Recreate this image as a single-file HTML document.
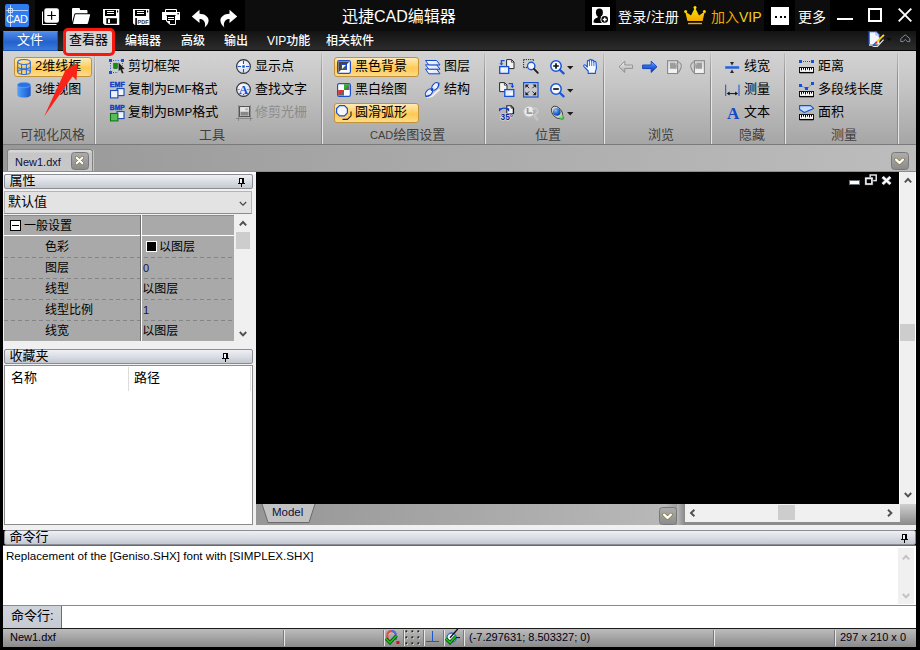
<!DOCTYPE html>
<html lang="zh-CN">
<head>
<meta charset="utf-8">
<title>迅捷CAD编辑器</title>
<style>
*{box-sizing:border-box;margin:0;padding:0}
html,body{width:920px;height:650px;overflow:hidden;background:#000}
body{position:relative;font-family:"Liberation Sans","Noto Sans CJK SC",sans-serif;font-size:13px;color:#000}
.a{position:absolute}
.t{position:absolute;white-space:nowrap;line-height:16px;height:16px}
svg{position:absolute;overflow:visible}
/* title bar */
#title{left:0;top:0;width:920px;height:31px;background:#0d0d0d}
#menubar{left:3px;top:31px;width:913px;height:19px;background:linear-gradient(#131313,#2c2c2c)}
.menu{color:#fff;font-size:12px;top:33px;font-weight:500}
/* ribbon */
#ribbon{left:3px;top:51px;width:913px;height:93px;background:linear-gradient(#d3d3d3 0%,#c6c6c6 35%,#a6a6a6 100%)}
.sep{position:absolute;top:53px;width:2px;height:91px;background:linear-gradient(90deg,#8c8c8c 0,#8c8c8c 1px,#e6e6e6 1px,#e6e6e6 2px);-webkit-mask-image:linear-gradient(rgba(0,0,0,.25) 0,#000 28%);mask-image:linear-gradient(rgba(0,0,0,.25) 0,#000 28%)}
.gl{position:absolute;top:127px;height:16px;line-height:16px;font-size:13px;color:#404040;white-space:nowrap}
.ri{position:absolute;font-size:13px;line-height:16px;height:16px;white-space:nowrap;color:#000}
.hb{position:absolute;height:20px;border:1px solid #c2923a;border-radius:3px;background:linear-gradient(#ffe9b6 0%,#ffd574 40%,#ffc850 55%,#ffdb8c 100%)}
/* panels */
.hdr{position:absolute;height:15px;border:1px solid #8a8d94;border-radius:2px;background:linear-gradient(#eef0f4 0%,#dcdfe6 45%,#c4c8d0 100%);font-size:13px}
.hdr span{position:absolute;left:4.5px;top:-2px;line-height:16px}
.grow{position:absolute;left:4px;width:230px;height:21px;background:#a9a9a9;font-size:12px}
.grow .k{position:absolute;left:40px;top:3px;line-height:16px;white-space:nowrap}
.grow .v{position:absolute;left:139px;top:3px;line-height:16px;white-space:nowrap}
.dash{position:absolute;left:4px;width:230px;height:1px;background:repeating-linear-gradient(90deg,#858585 0,#858585 4px,transparent 4px,transparent 7px)}
.dd{width:18px;height:18px;border:1px solid #787878;border-radius:3.5px;background:linear-gradient(#acacac,#8c8c8c)}
.pin{position:absolute;width:7px;height:9px}
.pin i{position:absolute;background:#000}
.sb{position:absolute;background:#f0f0f0}
.thumb{position:absolute;background:#cdcdcd}
.ssep{position:absolute;top:630px;width:2px;height:16px;border-left:1px solid #7a7a7a;border-right:1px solid #e8e8e8}
.st{position:absolute;top:629px;font-size:11px;line-height:16px;white-space:nowrap;color:#000014}
</style>
</head>
<body>
<!-- ===== TITLE BAR ===== -->
<div id="title" class="a"></div>
<div class="a" style="left:35px;top:0;width:210px;height:31px;background:#000"></div>
<div class="a" style="left:585px;top:0;width:31px;height:31px;background:#000"></div>
<div class="a" style="left:764px;top:0;width:31px;height:31px;background:#000"></div>
<div class="a" style="left:830px;top:0;width:90px;height:31px;background:#000"></div>
<!-- logo -->
<div class="a" style="left:5px;top:4px;width:24px;height:23px;background:#2f7cf0;border-radius:2px"></div>
<div class="a" style="left:10px;top:5px;width:1px;height:22px;background:rgba(230,240,255,.75)"></div>
<div class="a" style="left:6px;top:10px;width:22px;height:1px;background:rgba(230,240,255,.75)"></div>
<div class="a" style="left:8px;top:8px;width:5px;height:5px;border:1px solid rgba(230,240,255,.75)"></div>
<div class="t" style="left:6px;top:12px;font-size:11px;color:#fff;line-height:14px;letter-spacing:-0.6px">CAD</div>
<!-- title icons -->
<svg style="left:42px;top:8px" width="18" height="18" viewBox="0 0 18 18">
<path d="M0.5 3.5V16.5H14.5" fill="none" stroke="#fff" stroke-width="1"/>
<rect x="2.3" y="0.2" width="14.6" height="14.6" rx="2.2" fill="#fff"/>
<path d="M9.6 3.2V11.8M5.3 7.5H13.9" stroke="#000" stroke-width="1.2" fill="none"/></svg>
<svg style="left:71px;top:8px" width="20" height="17" viewBox="0 0 20 17">
<path d="M1 14.5V1Q1 0 2 0H8Q9 0 9 1V2H15.5Q16.5 2 16.5 3V5.2H4.6Q3.6 5.2 3.3 6.2Z" fill="#fff"/>
<path d="M4.8 6.2H18.6Q19.3 6.2 19.1 7L17 15.3Q16.8 16 16 16H2.6Q1.8 16 2.1 15.2L4 6.9Q4.2 6.2 4.8 6.2Z" fill="#fff"/></svg>
<svg style="left:103px;top:9px" width="17" height="16" viewBox="0 0 17 16">
<path d="M0 0H16.3V16H1.8L0 14.2Z" fill="#fff"/>
<rect x="2" y="1" width="11" height="6" fill="#000"/>
<rect x="4" y="2" width="7" height="1" fill="#fff"/><rect x="4" y="4" width="7" height="1" fill="#fff"/>
<rect x="14" y="1.3" width="1.2" height="2.2" rx=".6" fill="#000"/>
<rect x="3.3" y="9.2" width="10.6" height="5.6" fill="#000"/>
<rect x="5" y="10.2" width="2" height="3.8" fill="#fff"/></svg>
<svg style="left:133px;top:9px" width="17" height="16" viewBox="0 0 17 16">
<path d="M0 0H16.3V16H1.8L0 14.2Z" fill="#fff"/>
<rect x="2" y="1" width="11" height="6" fill="#000"/>
<rect x="4" y="2" width="7" height="1" fill="#fff"/><rect x="4" y="4" width="7" height="1" fill="#fff"/>
<rect x="14" y="1.3" width="1.2" height="2.2" rx=".6" fill="#000"/>
<rect x="2.3" y="9" width="1.6" height="7" fill="#000"/>
<rect x="4" y="10.3" width="12.3" height="5.7" fill="#fff"/>
<text x="4.6" y="15.2" font-family="Liberation Sans,sans-serif" font-weight="bold" font-size="5.6" fill="#333" textLength="11" lengthAdjust="spacingAndGlyphs">PDF</text></svg>
<svg style="left:162px;top:9px" width="18" height="16" viewBox="0 0 18 16">
<path d="M3.5 3V0.5H14.5V3" fill="none" stroke="#fff" stroke-width="1"/>
<path d="M0 3H18V11H14V6H4V11H0Z" fill="#fff"/>
<rect x="15.4" y="4" width="1.4" height="1.4" fill="#000"/>
<path d="M4.5 6.5V12L8 15.5H13.5V6.5" fill="#000" stroke="#fff" stroke-width="1"/>
<path d="M4.5 12H8V15.5Z" fill="#fff"/>
<rect x="6" y="8" width="6" height="1" fill="#fff"/><rect x="6" y="10" width="6" height="1" fill="#fff"/></svg>
<svg style="left:191px;top:9px" width="19" height="19" viewBox="0 0 19 19">
<path d="M0.8 7.4L8.5 0.8V4.8C13.5 4.8 17.6 7.6 17.6 11.6C17.6 14.6 15.6 16.8 13.6 18.6C14.6 16 14.2 13 12.6 11.4C11.4 10.3 10 10.1 8.5 10.1V14Z" fill="#fff"/></svg>
<svg style="left:219px;top:9px" width="19" height="19" viewBox="0 0 19 19">
<path transform="translate(19,0) scale(-1,1)" d="M0.8 7.4L8.5 0.8V4.8C13.5 4.8 17.6 7.6 17.6 11.6C17.6 14.6 15.6 16.8 13.6 18.6C14.6 16 14.2 13 12.6 11.4C11.4 10.3 10 10.1 8.5 10.1V14Z" fill="#fff"/></svg>
<!-- user -->
<svg style="left:592px;top:7px" width="18" height="18" viewBox="0 0 18 18">
<rect width="18" height="18" fill="#fff"/>
<ellipse cx="7.4" cy="5.6" rx="3.5" ry="4.2" fill="#000"/>
<path d="M1.5 15.5C1.2 12.5 3 11.2 5.6 10.4L6 8.5H9L9.4 10.4C11 10.9 12 11.4 12.6 12.4V15.8C8 16.3 4 16.2 1.5 15.5Z" fill="#000"/>
<circle cx="12.7" cy="12.4" r="4.3" fill="#fff"/>
<circle cx="12.7" cy="12.4" r="3.3" fill="#000"/>
<path d="M12.7 10.4V14.4M10.7 12.4H14.7" stroke="#fff" stroke-width="1.5" fill="none"/>
</svg>
<!-- crown -->
<svg style="left:684px;top:6px" width="22" height="19" viewBox="0 0 22 19">
<defs><linearGradient id="gc" x1="0" y1="0" x2="0" y2="1"><stop offset="0" stop-color="#ffe400"/><stop offset="1" stop-color="#f3aa00"/></linearGradient></defs>
<path d="M3.4 15L1.2 5.6L7 9.4L11 1.6L15 9.4L20.8 5.6L18.6 15Z" fill="url(#gc)"/>
<circle cx="11" cy="1.5" r="1.5" fill="#ffe400"/><circle cx="1.6" cy="5.4" r="1.5" fill="#ffd400"/><circle cx="20.4" cy="5.4" r="1.5" fill="#ffd400"/>
<rect x="4" y="16.8" width="14" height="1.4" fill="#f3aa00"/></svg>
<!-- more dots -->
<div class="a" style="left:771px;top:7px;width:18px;height:18px;background:#fff"></div>
<div class="a" style="left:775px;top:15.6px;width:2.3px;height:2.3px;background:#000"></div>
<div class="a" style="left:779.5px;top:15.6px;width:2.3px;height:2.3px;background:#000"></div>
<div class="a" style="left:784px;top:15.6px;width:2.3px;height:2.3px;background:#000"></div>
<!-- title text -->
<div class="t" style="left:342px;top:7px;font-size:16px;color:#fff;line-height:20px;height:20px">迅捷CAD编辑器</div>
<div class="t" style="left:618px;top:7px;font-size:14px;color:#fff;line-height:20px;height:20px;letter-spacing:.3px">登录/注册</div>
<div class="t" style="left:711px;top:7px;font-size:14px;line-height:20px;height:20px;color:#f0a800">加入<span style="color:#f0d020">VIP</span></div>
<div class="t" style="left:798px;top:7px;font-size:14px;color:#fff;line-height:20px;height:20px">更多</div>
<!-- window buttons -->
<div class="a" style="left:837px;top:18px;width:16px;height:2px;background:#fff"></div>
<div class="a" style="left:868px;top:8px;width:14px;height:14px;border:2px solid #fff"></div>
<svg style="left:898px;top:8px" width="14" height="14" viewBox="0 0 14 14"><path d="M0.7 0.7L13.3 13.3M13.3 0.7L0.7 13.3" stroke="#fff" stroke-width="1.9" fill="none"/></svg>

<!-- ===== MENU BAR ===== -->
<div id="menubar" class="a"></div>
<div class="a" style="left:3px;top:50px;width:913px;height:1px;background:#050505"></div>
<div class="a" style="left:3px;top:31px;width:55px;height:20px;background:linear-gradient(#4f8ae6 0%,#2c6ad2 45%,#2461cc 55%,#3b7bdc 100%);border:1px solid #1f57b8;border-top-color:#5a92ea"></div>
<div class="t menu" style="left:17px;font-size:13px;top:32px;font-weight:400">文件</div>
<div class="a" style="left:66px;top:31px;width:46px;height:21px;background:#d2d2d2"></div>
<div class="t" style="left:69px;top:32px;font-size:13px;color:#000">查看器</div>
<div class="t menu" style="left:125px">编辑器</div>
<div class="t menu" style="left:181px">高级</div>
<div class="t menu" style="left:224px">输出</div>
<div class="t menu" style="left:267px">VIP功能</div>
<div class="t menu" style="left:326px">相关软件</div>

<!-- ===== RIBBON ===== -->
<div id="ribbon" class="a"></div>
<div class="a" style="left:3px;top:144px;width:913px;height:1px;background:#7a7a7a"></div>
<div class="sep" style="left:94px"></div>
<div class="sep" style="left:321px"></div>
<div class="sep" style="left:484px"></div>
<div class="sep" style="left:603px"></div>
<div class="sep" style="left:710px"></div>
<div class="sep" style="left:784px"></div>
<div class="sep" style="left:897px"></div>
<!-- group labels -->
<div class="gl" style="left:20px">可视化风格</div>
<div class="gl" style="left:199px">工具</div>
<div class="gl" style="left:370px"><span style="font-size:11px">CAD</span>绘图设置</div>
<div class="gl" style="left:535px">位置</div>
<div class="gl" style="left:648px">浏览</div>
<div class="gl" style="left:739px">隐藏</div>
<div class="gl" style="left:831px">测量</div>
<!-- group 1 -->
<div class="hb" style="left:14px;top:57px;width:78px"></div>
<div class="ri" style="left:35px;top:58px">2维线框</div>
<div class="ri" style="left:35px;top:81px">3维视图</div>
<!-- group 2 -->
<div class="ri" style="left:128px;top:58px">剪切框架</div>
<div class="ri" style="left:128px;top:81px">复制为<span style="font-size:11.6px">EMF</span>格式</div>
<div class="ri" style="left:128px;top:104px">复制为<span style="font-size:11.6px">BMP</span>格式</div>
<div class="ri" style="left:255px;top:58px">显示点</div>
<div class="ri" style="left:255px;top:81px">查找文字</div>
<div class="ri" style="left:255px;top:104px;color:#8c8c8c">修剪光栅</div>
<!-- group 3 -->
<div class="hb" style="left:334px;top:57px;width:85px"></div>
<div class="hb" style="left:334px;top:103px;width:85px"></div>
<div class="ri" style="left:355px;top:58px">黑色背景</div>
<div class="ri" style="left:355px;top:81px">黑白绘图</div>
<div class="ri" style="left:355px;top:104px">圆滑弧形</div>
<div class="ri" style="left:444px;top:58px">图层</div>
<div class="ri" style="left:444px;top:81px">结构</div>
<!-- group 6 -->
<div class="ri" style="left:744px;top:58px">线宽</div>
<div class="ri" style="left:744px;top:81px">测量</div>
<div class="ri" style="left:744px;top:104px">文本</div>
<!-- group 7 -->
<div class="ri" style="left:818px;top:58px">距离</div>
<div class="ri" style="left:818px;top:81px">多段线长度</div>
<div class="ri" style="left:818px;top:104px">面积</div>

<!-- ribbon icons -->
<!-- g1: wire cylinder -->
<svg style="left:17px;top:59px" width="14" height="16" viewBox="0 0 14 16">
<g fill="none" stroke="#2a6fe2" stroke-width="1.1">
<ellipse cx="7" cy="3" rx="6.3" ry="2.5"/><ellipse cx="7" cy="13" rx="6.3" ry="2.5"/>
<path d="M0.7 3V13M13.3 3V13M4.6 5.3V15.2M9.4 5.3V15.2M0.7 8.3C3 10.2 11 10.2 13.3 8.3"/></g></svg>
<!-- g1: solid cylinder -->
<svg style="left:17px;top:82px" width="14" height="16" viewBox="0 0 14 16">
<defs><linearGradient id="cy" x1="0" y1="0" x2="1" y2="0"><stop offset="0" stop-color="#5aa2f6"/><stop offset=".35" stop-color="#3a86ee"/><stop offset="1" stop-color="#1d58c8"/></linearGradient></defs>
<path d="M0.3 3V13C0.3 16.4 13.7 16.4 13.7 13V3Z" fill="url(#cy)"/>
<ellipse cx="7" cy="3" rx="6.7" ry="2.7" fill="#2c72e2" stroke="#79b4fa" stroke-width=".6"/></svg>
<!-- g2 col1: crop frame -->
<svg style="left:109px;top:59px" width="16" height="16" viewBox="0 0 16 16">
<g fill="#1450d8"><rect x="0" y="0" width="3" height="3"/><rect x="12" y="0" width="3" height="3"/><rect x="0" y="12" width="3" height="3"/></g>
<path d="M4 1.5H11.5M1.5 4V11.5M4 13.5H9M13.5 4V7" stroke="#1450d8" stroke-width="1" stroke-dasharray="1 1.4" fill="none"/>
<rect x="4.7" y="4.2" width="3.6" height="5.4" fill="#0f920f" stroke="#0a6a0a" stroke-width=".6"/>
<path d="M9.6 3.4V12.2L11.3 10.6L13 14.6L14.6 13.9L13 10.2L15.6 10.1Z" fill="#1c1c1c"/></svg>
<!-- EMF -->
<svg style="left:109px;top:82px" width="17" height="17" viewBox="0 0 17 17">
<text x="0.8" y="4.8" font-family="Liberation Sans,sans-serif" font-weight="bold" font-size="6.4" fill="#1040c8" stroke="#1040c8" stroke-width=".35" textLength="15" lengthAdjust="spacingAndGlyphs">EMF</text>
<rect x="8" y="6.6" width="7" height="7" fill="#f2f5fd" stroke="#1a48b8" stroke-width="1.1"/>
<rect x="1.5" y="8.5" width="7.4" height="7.4" fill="#eaf0fc" stroke="#1a48b8" stroke-width="1.1"/>
<path d="M8.6 6.6V8.6" stroke="#1450d8" stroke-width=".8"/></svg>
<!-- BMP -->
<svg style="left:109px;top:105px" width="17" height="17" viewBox="0 0 17 17">
<text x="0.8" y="4.8" font-family="Liberation Sans,sans-serif" font-weight="bold" font-size="6.4" fill="#1040c8" stroke="#1040c8" stroke-width=".35" textLength="15" lengthAdjust="spacingAndGlyphs">BMP</text>
<rect x="8" y="6.6" width="7" height="7" fill="#f2f5fd" stroke="#1a48b8" stroke-width="1.1"/>
<rect x="1.5" y="8.5" width="7.4" height="7.4" fill="#5cba5c" stroke="#0c7a0c" stroke-width="1.1"/>
<path d="M8.6 6.6V8.6" stroke="#d04040" stroke-width=".8"/></svg>
<!-- g2 col2: show point -->
<svg style="left:236px;top:59px" width="15" height="15" viewBox="0 0 15 15">
<defs><radialGradient id="rg1" cx=".4" cy=".35" r=".7"><stop offset="0" stop-color="#fff"/><stop offset="1" stop-color="#cfd8f2"/></radialGradient></defs>
<circle cx="7.5" cy="7.5" r="6.9" fill="url(#rg1)" stroke="#2e2e2e" stroke-width="1.1"/>
<path d="M7.5 1.6V5M7.5 10V13.4M1.6 7.5H5M10 7.5H13.4" stroke="#1450d8" stroke-width="1.1"/>
<rect x="6.3" y="6.3" width="2.4" height="2.4" fill="#1450d8"/></svg>
<!-- find text -->
<svg style="left:236px;top:82px" width="15" height="15" viewBox="0 0 15 15">
<circle cx="7.5" cy="7.5" r="6.9" fill="url(#rg1)" stroke="#2e2e2e" stroke-width="1.1"/>
<path d="M1.6 7.5H3.6M11.4 7.5H13.4M7.5 12V13.4" stroke="#1450d8" stroke-width="1" stroke-dasharray="1 .6"/>
<text x="7.5" y="11.8" text-anchor="middle" font-family="Liberation Serif,serif" font-weight="bold" font-size="12.5" fill="#1448c8">A</text></svg>
<!-- trim raster (disabled) -->
<svg style="left:236px;top:105px" width="17" height="17" viewBox="0 0 17 17">
<path d="M2.5 0V16M14.5 0V16M0 13.5H16.5" stroke="#7a7a7a" stroke-width=".7"/>
<rect x="3.5" y="1.5" width="10" height="10" fill="#d8d8d8" stroke="#555" stroke-width="1"/>
<rect x="4.5" y="6.6" width="8" height="4" fill="#888"/><rect x="4.5" y="2.5" width="8" height="4" fill="#e6e6e6"/><circle cx="10.6" cy="4.3" r="1.3" fill="#b4b4b4"/></svg>
<!-- g3: black bg -->
<svg style="left:337px;top:60px" width="14" height="14" viewBox="0 0 14 14">
<rect x=".6" y=".6" width="12.8" height="12.8" rx="1.6" fill="#fff" stroke="#1a50d0" stroke-width="1.2"/>
<path d="M1.4 1.4H12.6L1.4 12.6Z" fill="#444"/>
<rect x="4" y="4" width="6" height="6" fill="#1a50d0"/>
<path d="M5 5H9V9H5Z" fill="#fff"/><path d="M9 5V9H5Z" fill="#555"/></svg>
<!-- bw -->
<svg style="left:337px;top:83px" width="14" height="14" viewBox="0 0 14 14">
<rect x=".6" y=".6" width="12.8" height="12.8" rx="1.6" fill="#fff" stroke="#1a50d0" stroke-width="1.2"/>
<path d="M7 1.4H12.6V7H7Z" fill="#666"/><path d="M7 1.4H12.6L7 7Z" fill="#28b428"/>
<path d="M1.4 7H7V12.6H1.4Z" fill="#666"/><path d="M1.4 7H7L1.4 12.6Z" fill="#e03030"/></svg>
<!-- smooth arc -->
<svg style="left:336px;top:105px" width="16" height="16" viewBox="0 0 16 16">
<path d="M3.6 0.6H8.4L11.4 3.6V7.8L8.4 10.8H3.6L0.6 7.8V3.6Z" fill="#f4f6fc" stroke="#1a50d0" stroke-width="1.2"/>
<path d="M15 6.4V10.8L11.4 14.4H6.5" fill="none" stroke="#222" stroke-width="1.1"/></svg>
<!-- layers -->
<svg style="left:425px;top:60px" width="16" height="15" viewBox="0 0 16 15">
<defs><linearGradient id="ly" x1="0" y1="0" x2="1" y2="1"><stop offset="0" stop-color="#fff"/><stop offset="1" stop-color="#d4e0fa"/></linearGradient></defs>
<g fill="url(#ly)" stroke="#1448c8" stroke-width="1" stroke-linejoin="round">
<path d="M0.5 9H11.6L15 13.8H3.8Z"/><path d="M0.5 4.8H11.6L15 9.2H3.8Z"/><path d="M0.5 0.5H11.6L15 4.9H3.8Z"/></g></svg>
<!-- dna -->
<svg style="left:425px;top:82px" width="16" height="16" viewBox="0 0 16 16">
<path d="M2 15.4L7 14.2L14.6 7.4" fill="none" stroke="#f2f2f2" stroke-width="1.6"/>
<g fill="#e4ecfc" stroke="#1448c8" stroke-width="1.05">
<ellipse cx="3.9" cy="10.6" rx="4.4" ry="2.7" transform="rotate(-48 3.9 10.6)"/>
<ellipse cx="10.2" cy="4.4" rx="4.4" ry="2.7" transform="rotate(-48 10.2 4.4)"/></g>
<path d="M0.4 14.2C2 14.6 3.4 14 4.6 13M13.8 0.6C14.2 2 13.6 3.2 12.8 4.4" fill="none" stroke="#1448c8" stroke-width="1.2"/>
<path d="M2.6 9L5.4 12M4.4 7.8L6.4 10M8.8 3L11.6 6M10.4 1.6L12.6 4" stroke="#fff" stroke-width=".9"/>
<path d="M6 8.6L8 6.4" stroke="#1448c8" stroke-width="1.6"/></svg>
<!-- g4 position icons -->
<svg style="left:499px;top:59px" width="16" height="15" viewBox="0 0 16 15">
<path d="M7.6 0.6H12.6L15 3V9.6H7.6Z" fill="#f4f4f4" stroke="#2a2a2a" stroke-width="1"/><path d="M12.4 0.8V3.2H14.8" fill="none" stroke="#2a2a2a" stroke-width=".8"/>
<rect x="0.7" y="7.6" width="9" height="6.8" fill="#e8effc" stroke="#1450d8" stroke-width="1.3"/>
<rect x="2" y="9" width="3" height="2.4" fill="#fff"/>
<path d="M5.6 1.6H2.4V4.6" fill="none" stroke="#1450d8" stroke-width="1.3"/><path d="M0.4 4.2L2.4 6.6L4.4 4.2Z" fill="#1450d8"/></svg>
<svg style="left:499px;top:82px" width="16" height="15" viewBox="0 0 16 15">
<path d="M0.6 0.6H5.6L8 3V9.6H0.6Z" fill="#f4f4f4" stroke="#2a2a2a" stroke-width="1"/><path d="M5.4 0.8V3.2H7.8" fill="none" stroke="#2a2a2a" stroke-width=".8"/>
<rect x="5.8" y="7.6" width="9" height="6.8" fill="#e8effc" stroke="#1450d8" stroke-width="1.3"/>
<rect x="11" y="11" width="2.4" height="2" fill="#fff"/>
<path d="M9.6 1.6H13.4V4.2" fill="none" stroke="#1450d8" stroke-width="1.3"/><path d="M11.4 3.8L13.4 6.2L15.4 3.8Z" fill="#1450d8"/></svg>
<svg style="left:499px;top:105px" width="16" height="16" viewBox="0 0 16 16">
<path d="M7.8 0.7H12.2L14.4 2.9V8.6H7.8Z" fill="#f6f6f6" stroke="#222" stroke-width="1.1"/><path d="M12 0.8V3.1H14.3" fill="none" stroke="#222" stroke-width=".8"/><path d="M14.5 3V8.7" stroke="#111" stroke-width="1.2"/>
<path d="M2 4.4C3.4 2.8 6.8 2.8 8.4 4.4" fill="none" stroke="#1450d8" stroke-width="1.3"/>
<path d="M0 3.2H3.4L0 6.8Z" fill="#0c3cc8"/><path d="M10.2 3.2H6.8L10.2 6.8Z" fill="#0a2ea8"/>
<text x="1.6" y="14.9" font-family="Liberation Sans,sans-serif" font-weight="bold" font-size="8.2" fill="#0a1ea8" stroke="#e6e2cc" stroke-width="1.2" paint-order="stroke" textLength="12.6" lengthAdjust="spacingAndGlyphs">35°</text></svg>
<!-- zoom window -->
<svg style="left:523px;top:59px" width="16" height="16" viewBox="0 0 16 16">
<path d="M0.6 0.6H10.4M0.6 0.6V8.6M0.6 8.6H4M10.4 0.6V2.4" fill="none" stroke="#222" stroke-width="1" stroke-dasharray="1.2 1"/>
<circle cx="8.2" cy="7" r="3.7" fill="#f4f8ff" stroke="#1a56d8" stroke-width="1.4"/>
<path d="M11 9.8L14.8 13.8" stroke="#1c1c1c" stroke-width="1.8" stroke-linecap="round"/></svg>
<!-- zoom extents -->
<svg style="left:523px;top:82px" width="16" height="16" viewBox="0 0 16 16">
<rect x="0.6" y="0.6" width="14.4" height="14.4" fill="#c6c8cc" stroke="#1450d8" stroke-width="1.2"/>
<g fill="#1c1c1c"><path d="M2.4 2.4H6L2.4 6Z"/><path d="M13.2 2.4H9.6L13.2 6Z"/><path d="M2.4 13.2H6L2.4 9.6Z"/><path d="M13.2 13.2H9.6L13.2 9.6Z"/></g>
<path d="M3.4 3.4L6.2 6.2M12.2 3.4L9.4 6.2M3.4 12.2L6.2 9.4M12.2 12.2L9.4 9.4" stroke="#1c1c1c" stroke-width=".9"/></svg>
<!-- prev zoom disabled -->
<svg style="left:523px;top:105px" width="17" height="17" viewBox="0 0 17 17">
<path d="M11.4 10.6L14.2 14.4" stroke="#c4c4c4" stroke-width="2.6" stroke-linecap="round"/>
<circle cx="6.2" cy="6.6" r="5.5" fill="#ececec" stroke="#c2c2c2" stroke-width="1.2"/>
<path d="M10.6 3.4C14.4 2.4 16 6.4 13.4 8.6C12.6 9.4 11.6 9.6 10.8 9.2" fill="none" stroke="#c8c8c8" stroke-width="1.8"/>
<path d="M4.6 3V8.2H9.4" fill="none" stroke="#989898" stroke-width="1.8"/><path d="M9.6 5.2C11.6 5.4 11.8 8 10.2 8.8" fill="none" stroke="#a0a0a0" stroke-width="1.3"/></svg>
<!-- zoom in -->
<svg style="left:550px;top:60px" width="16" height="15" viewBox="0 0 16 15">
<circle cx="6" cy="6" r="5.2" fill="#f4f8ff" stroke="#1a56d8" stroke-width="1.5"/>
<path d="M10 10L13.6 13.4" stroke="#1a56d8" stroke-width="2.2" stroke-linecap="round"/>
<path d="M6 3.2V8.8M3.2 6H8.8" stroke="#111" stroke-width="1.7"/></svg>
<svg style="left:550px;top:83px" width="16" height="15" viewBox="0 0 16 15">
<circle cx="6" cy="6" r="5.2" fill="#f4f8ff" stroke="#1a56d8" stroke-width="1.5"/>
<path d="M10 10L13.6 13.4" stroke="#1a56d8" stroke-width="2.2" stroke-linecap="round"/>
<path d="M3.2 6H8.8" stroke="#111" stroke-width="1.7"/></svg>
<!-- orbit -->
<svg style="left:550px;top:105px" width="16" height="16" viewBox="0 0 16 16">
<defs><radialGradient id="sp" cx=".35" cy=".3" r=".75"><stop offset="0" stop-color="#8cc4ff"/><stop offset=".5" stop-color="#2a72e0"/><stop offset="1" stop-color="#0e3aa0"/></radialGradient>
<radialGradient id="sg" cx=".35" cy=".3" r=".75"><stop offset="0" stop-color="#a8f0a0"/><stop offset="1" stop-color="#129a12"/></radialGradient></defs>
<ellipse cx="7" cy="7.4" rx="4.6" ry="7" transform="rotate(-38 7 7.4)" fill="#d6d2c0" stroke="#3a3a3a" stroke-width=".9"/>
<circle cx="6.8" cy="7" r="3.8" fill="url(#sp)"/>
<circle cx="11.8" cy="12.4" r="2.4" fill="url(#sg)"/></svg>
<!-- dropdown arrows -->
<svg style="left:567px;top:66px" width="7" height="4" viewBox="0 0 7 4"><path d="M0 0H6.4L3.2 3.4Z" fill="#1c1c1c"/></svg>
<svg style="left:567px;top:89px" width="7" height="4" viewBox="0 0 7 4"><path d="M0 0H6.4L3.2 3.4Z" fill="#1c1c1c"/></svg>
<svg style="left:567px;top:112px" width="7" height="4" viewBox="0 0 7 4"><path d="M0 0H6.4L3.2 3.4Z" fill="#1c1c1c"/></svg>
<!-- hand -->
<svg style="left:583px;top:59px" width="15" height="15" viewBox="0 0 15 15">
<path d="M5.2 14.4V12L1 7.6C0 6.4 1.4 5.2 2.6 6.2L4.4 8V2.4C4.4 1 6.2 1 6.4 2.4V1.4C6.6 0 8.4 0 8.6 1.4V2C8.8 0.8 10.6 0.8 10.8 2.2V3.2C11 2 12.8 2 13 3.4L13.4 8.4C13.4 10.4 12.8 11.4 12.4 12.2V14.4Z" fill="#f4f8ff" stroke="#1a56d8" stroke-width="1.1" stroke-linejoin="round"/>
<path d="M6.5 2.4V7M8.7 2V7M10.9 3.2V7" stroke="#1a56d8" stroke-width=".8" fill="none"/></svg>
<!-- g5 browse -->
<svg style="left:618px;top:60px" width="16" height="13" viewBox="0 0 16 13">
<defs><linearGradient id="ag" x1="0" y1="0" x2="0" y2="1"><stop offset="0" stop-color="#f4f4f4"/><stop offset=".5" stop-color="#cfcfcf"/><stop offset="1" stop-color="#a8a8a8"/></linearGradient>
<linearGradient id="pg" x1="0" y1="0" x2="0" y2="1"><stop offset="0" stop-color="#d8d8d8"/><stop offset="1" stop-color="#f8f8f8"/></linearGradient></defs>
<path d="M1 6.8L6.8 1.2V5H14.6V8.4H6.8V12.4Z" fill="url(#ag)" stroke="#8c8c8c" stroke-width=".9" stroke-linejoin="round"/></svg>
<svg style="left:642px;top:60px" width="16" height="13" viewBox="0 0 16 13">
<defs><linearGradient id="ar" x1="0" y1="0" x2="0" y2="1"><stop offset="0" stop-color="#9cc4ff"/><stop offset=".45" stop-color="#2a6ee8"/><stop offset="1" stop-color="#0a30a8"/></linearGradient></defs>
<path d="M15 6.8L9.2 1.2V5H0.6V8.6H9.2V12.4Z" fill="url(#ar)" stroke="#0c3cc0" stroke-width=".9" stroke-linejoin="round"/></svg>
<svg style="left:667px;top:60px" width="15" height="14" viewBox="0 0 15 14">
<path d="M9 1.2C13 1.6 15 4.4 14.2 7C13.6 9.4 12.4 11.2 11.4 12.6" fill="#d2d2d2" stroke="#909090" stroke-width="1.1"/>
<rect x="0.6" y="0.7" width="10" height="12.8" fill="url(#pg)" stroke="#888" stroke-width="1.1"/>
<path d="M3 2.8H8.4L8.4 4.4L9.6 5.6V8.8H3Z" fill="#9c9c9c"/><path d="M8.4 2.8L11.4 4.6L9 6.4Z" fill="#a8a8a8"/></svg>
<svg style="left:690px;top:60px" width="15" height="14" viewBox="0 0 15 14">
<path d="M6 1.2C2 1.6 0 4.4 0.8 7C1.4 9.4 2.6 11.2 3.6 12.6" fill="#d2d2d2" stroke="#909090" stroke-width="1.1"/>
<rect x="4.4" y="0.7" width="10" height="12.8" fill="url(#pg)" stroke="#888" stroke-width="1.1"/>
<path d="M12 2.8H6.6L6.6 4.4L5.4 5.6V8.8H12Z" fill="#9c9c9c"/><path d="M6.6 2.8L3.6 4.6L6 6.4Z" fill="#a8a8a8"/></svg>
<!-- g6 -->
<svg style="left:725px;top:61px" width="15" height="13" viewBox="0 0 15 13">
<defs><linearGradient id="lw" x1="0" y1="0" x2="0" y2="1"><stop offset="0" stop-color="#4a8af0"/><stop offset="1" stop-color="#0e44c4"/></linearGradient></defs>
<rect x="0.2" y="5" width="14" height="2.6" fill="url(#lw)"/>
<path d="M5 0.9H9L7 4.4Z" fill="#2a2a2a"/>
<path d="M5 11.9H9L7 8.4Z" fill="#2a2a2a"/></svg>
<svg style="left:725px;top:84px" width="15" height="13" viewBox="0 0 15 13">
<path d="M0.7 0.6V12M14 0.6V12" stroke="#1450d8" stroke-width="1"/>
<path d="M3 9.6H11.8" stroke="#111" stroke-width="1"/><path d="M1.8 9.6L4.6 7.6V11.6Z M13 9.6L10.2 7.6V11.6Z" fill="#111"/></svg>
<div class="t" style="left:727px;top:104.5px;font-family:'Liberation Serif',serif;font-weight:bold;font-size:17px;color:#1448c8;line-height:18px;height:18px">A</div>
<!-- g7 rulers -->
<svg style="left:799px;top:60px" width="15" height="13" viewBox="0 0 15 13">
<rect x="0" y="0" width="3" height="3" fill="#1450d8"/><rect x="12" y="0" width="3" height="3" fill="#1450d8"/>
<path d="M4 1.5H11" stroke="#1450d8" stroke-width="1" stroke-dasharray="1 1"/>
<rect x="0.5" y="7.5" width="14" height="5" fill="#fff" stroke="#111" stroke-width="1"/>
<path d="M2.5 8V10.4M4.5 8V9.6M6.5 8V10.4M8.5 8V9.6M10.5 8V10.4M12.5 8V9.6" stroke="#000" stroke-width="1"/><path d="M0.5 12.6H14.5" stroke="#000" stroke-width="1.4"/></svg>
<svg style="left:799px;top:82px" width="15" height="15" viewBox="0 0 15 15">
<rect x="0" y="2" width="3" height="3" fill="#1450d8"/><rect x="6" y="5" width="3" height="3" fill="#1450d8"/><rect x="12" y="0" width="3" height="3" fill="#1450d8"/>
<path d="M3.4 4.4L6 6M9.4 5.6L12 2.6" stroke="#1450d8" stroke-width=".9" stroke-dasharray="1 1"/>
<rect x="0.5" y="9.5" width="14" height="5" fill="#fff" stroke="#111" stroke-width="1"/>
<path d="M2.5 10V12.4M4.5 10V11.6M6.5 10V12.4M8.5 10V11.6M10.5 10V12.4M12.5 10V11.6" stroke="#000" stroke-width="1"/><path d="M0.5 14.6H14.5" stroke="#000" stroke-width="1.4"/></svg>
<svg style="left:799px;top:105px" width="15" height="15" viewBox="0 0 15 15">
<path d="M0.6 0.6H11.6L14.6 3.4L5.4 7.4L0.6 4.6Z" fill="#c6dcfc" stroke="#1450d8" stroke-width="1.1" stroke-linejoin="round"/>
<rect x="0.5" y="9.5" width="14" height="5" fill="#fff" stroke="#111" stroke-width="1"/>
<path d="M2.5 10V12.4M4.5 10V11.6M6.5 10V12.4M8.5 10V11.6M10.5 10V12.4M12.5 10V11.6" stroke="#000" stroke-width="1"/><path d="M0.5 14.6H14.5" stroke="#000" stroke-width="1.4"/></svg>

<!-- red highlight box -->
<div class="a" style="left:63px;top:28px;width:52px;height:28px;border:3px solid #f5190f;border-radius:5px"></div>

<!-- red arrow -->
<svg style="left:0;top:0" width="920" height="650" viewBox="0 0 920 650"><path d="M44.1 116.5L65.4 70.2L77.6 62.8L76.5 80.4L72.6 76.2Z" fill="#fb2318"/></svg>
<!-- menubar right icons -->
<svg style="left:868px;top:31px" width="17" height="16" viewBox="0 0 17 16">
<path d="M1 0.6H8L11.4 3.8V13.4H1Z" fill="#f4f6ff"/>
<path d="M1.1 13.4V0.7H8L11.3 3.9V6" fill="none" stroke="#1450d8" stroke-width="1.3"/>
<path d="M7.8 0.8V4H11" fill="#dfe6fa" stroke="#7a98e0" stroke-width=".6"/>
<path d="M1 14.2H5M4.6 15.4H9.4L15.6 8.6" fill="none" stroke="#e8e8e8" stroke-width="1.2"/>
<path d="M15.4 4.4L8.6 11.2" stroke="#f6d400" stroke-width="1.9"/>
<path d="M8.8 11L7.6 12.2" stroke="#e01818" stroke-width="1.9"/>
<path d="M7.6 12.2L4.8 14.8" stroke="#2a60c8" stroke-width="1.7"/>
<path d="M16 3.8L15 4.8" stroke="#e0d4a0" stroke-width="1.7"/></svg>
<svg style="left:886px;top:38px" width="7" height="3" viewBox="0 0 7 3"><path d="M0 0H6L3 2.8Z" fill="#0c0c0c"/></svg>
<svg style="left:900px;top:34px" width="11" height="9" viewBox="0 0 11 9"><path d="M0.8 7.6V4.6L5.3 0.8L9.8 4.6V7.6H7.4L5.3 5.4L3.2 7.6Z" fill="none" stroke="#858b93" stroke-width="1"/></svg>
<!-- ===== DOC TAB STRIP ===== -->
<div class="a" style="left:3px;top:145px;width:913px;height:27px;background:linear-gradient(90deg,#989898,#bdbdbd)"></div>
<div class="a" style="left:7px;top:149px;width:86px;height:22px;border:1px solid #828282;border-bottom:none;border-radius:3px 3px 0 0;background:linear-gradient(#d6d6d6 0,#d6d6d6 2px,#c6c6c6 3px,#c8c8c8 100%);box-shadow:1px 0 0 #c4c4c4"></div>
<div class="a" style="left:3px;top:171px;width:913px;height:1px;background:#8e8e8e"></div>
<div class="t" style="left:15px;top:154px;font-size:11px;color:#10103c">New1.dxf</div>
<div class="a dd" style="left:71px;top:152px"></div>
<svg style="left:75px;top:156px" width="9" height="9" viewBox="0 0 9 9"><path d="M1.6 1.6L7.4 7.4M7.4 1.6L1.6 7.4" stroke="#8a7a28" stroke-width="3.4" stroke-linecap="round"/><path d="M1.7 1.7L7.3 7.3M7.3 1.7L1.7 7.3" stroke="#fff" stroke-width="2.1" stroke-linecap="round"/></svg>
<div class="a dd" style="left:891px;top:152px"></div>
<svg style="left:895px;top:158px" width="9" height="7" viewBox="0 0 9 7"><path d="M1 1.5L4.5 5L8 1.5" fill="none" stroke="#8a7a28" stroke-width="3.5" stroke-linecap="round" stroke-linejoin="round"/><path d="M1.1 1.6L4.5 5L7.9 1.6" fill="none" stroke="#fff" stroke-width="2.3" stroke-linecap="round" stroke-linejoin="round"/></svg>
<!-- ===== LEFT PANEL ===== -->
<div class="a" style="left:3px;top:172px;width:253px;height:357px;background:#f0f0f0"></div>
<div class="a" style="left:3px;top:172px;width:253px;height:2px;background:#fff"></div>
<div class="hdr" style="left:4px;top:174px;width:249px"><span>属性</span></div>
<div class="a" style="left:4px;top:191px;width:248px;height:23px;background:#e3e3e3;border:1px solid #b4b4b4;border-bottom-color:#8c8c8c"></div>
<div class="t" style="left:8px;top:194px;font-size:13px">默认值</div>
<!-- grid -->
<div class="a" style="left:4px;top:215px;width:230px;height:126px;background:#a9a9a9"></div>
<div class="a" style="left:4px;top:215px;width:230px;height:1px;background:#8a8a8a"></div>
<div class="a" style="left:4px;top:235px;width:230px;height:1px;background:#fff"></div>
<div class="dash" style="top:257px"></div>
<div class="dash" style="top:278px"></div>
<div class="dash" style="top:299px"></div>
<div class="dash" style="top:320px"></div>
<div class="a" style="left:140px;top:215px;width:1px;height:126px;background:#6e6e6e"></div>
<div class="a" style="left:141px;top:215px;width:1px;height:126px;background:#fff"></div>
<div class="a" style="left:10px;top:220px;width:11px;height:11px;background:#fff;border:1px solid #000"></div>
<div class="a" style="left:12px;top:225px;width:7px;height:1px;background:#000"></div>
<div class="t" style="left:24px;top:218px;font-size:12px">一般设置</div>
<div class="t" style="left:45px;top:239px;font-size:12px">色彩</div>
<div class="t" style="left:45px;top:260px;font-size:12px">图层</div>
<div class="t" style="left:45px;top:281px;font-size:12px">线型</div>
<div class="t" style="left:45px;top:302px;font-size:12px">线型比例</div>
<div class="t" style="left:45px;top:323px;font-size:12px">线宽</div>
<div class="a" style="left:146px;top:241px;width:11px;height:11px;background:#000;border:1px solid #fff"></div>
<div class="t" style="left:159px;top:239px;font-size:12px">以图层</div>
<div class="t" style="left:143px;top:260px;font-size:11px;color:#12124a">0</div>
<div class="t" style="left:142.3px;top:281px;font-size:12px">以图层</div>
<div class="t" style="left:143px;top:302px;font-size:11px;color:#12124a">1</div>
<div class="t" style="left:142.3px;top:323px;font-size:12px">以图层</div>
<div class="sb" style="left:235px;top:215px;width:16px;height:126px"></div>
<div class="thumb" style="left:236px;top:232px;width:14px;height:17px"></div>
<!-- favourites -->
<div class="hdr" style="left:4px;top:349px;width:249px"><span>收藏夹</span></div>
<div class="a" style="left:4px;top:365px;width:249px;height:160px;background:#fff;border:1px solid #8c8c8c"></div>
<div class="a" style="left:128px;top:367px;width:1px;height:24px;background:#dcdcdc"></div>
<div class="a" style="left:250px;top:367px;width:1px;height:24px;background:#e4e4e4"></div>
<div class="t" style="left:11px;top:370px;font-size:13px">名称</div>
<div class="t" style="left:134px;top:370px;font-size:13px">路径</div>

<!-- ===== CANVAS ===== -->
<div class="a" style="left:256px;top:172px;width:644px;height:332px;background:#000"></div>
<div class="sb" style="left:899px;top:172px;width:17px;height:332px;border-left:1px solid #fff;border-right:1px solid #fff"></div>
<div class="thumb" style="left:900px;top:324px;width:15px;height:17px"></div>
<!-- bottom strip -->
<div class="a" style="left:256px;top:504px;width:660px;height:21px;background:linear-gradient(90deg,#969696 0,#b8b8b8 62%,#8c8c8c 65%,#8c8c8c 100%)"></div>
<div class="a" style="left:900px;top:504px;width:16px;height:21px;background:linear-gradient(#d0d0d0,#8a8a8a)"></div>
<div class="a" style="left:677px;top:504px;width:8px;height:21px;background:linear-gradient(90deg,#b8b8b8,#888)"></div>
<div class="sb" style="left:685px;top:504px;width:215px;height:18px"></div>
<div class="thumb" style="left:778px;top:505px;width:17px;height:15px"></div>
<div class="a dd" style="left:659px;top:507px"></div>
<svg style="left:256px;top:504px" width="70" height="21" viewBox="0 0 70 21"><path d="M6 0L12 18.5L53 18.5L59 0" fill="#c2c2c2" stroke="#6a6a6a" stroke-width="1"/></svg>
<div class="t" style="left:272px;top:504px;font-size:11.5px;color:#10103c">Model</div>

<!-- ===== COMMAND PANEL ===== -->
<div class="a" style="left:3px;top:525px;width:913px;height:5px;background:#f0f0f0"></div>
<div class="hdr" style="left:4px;top:530px;width:912px"><span>命令行</span></div>
<div class="a" style="left:3px;top:545px;width:913px;height:1px;background:#6a6a6a"></div>
<div class="a" style="left:3px;top:546px;width:913px;height:59px;background:#fff"></div>
<div class="t" style="left:6px;top:548px;font-size:11.6px">Replacement of the [Geniso.SHX] font with [SIMPLEX.SHX]</div>
<div class="sb" style="left:898px;top:548px;width:16px;height:56px"></div>
<div class="a" style="left:3px;top:605px;width:913px;height:1px;background:#8a8a8a"></div>
<div class="a" style="left:3px;top:606px;width:913px;height:22px;background:#fff"></div>
<div class="a" style="left:3px;top:606px;width:59px;height:22px;background:linear-gradient(#cfd3da,#c6cad2);border-right:1px solid #6e6e6e"></div>
<div class="t" style="left:11px;top:608px;font-size:13px">命令行:</div>

<!-- widgets -->
<div class="pin" style="left:238px;top:178px"><i style="left:1px;top:0;width:5px;height:1px"></i><i style="left:1px;top:0;width:1px;height:5px"></i><i style="left:4px;top:0;width:2px;height:5px"></i><i style="left:0;top:5px;width:7px;height:1px"></i><i style="left:3px;top:6px;width:1px;height:3px"></i><i style="left:2px;top:1px;width:2px;height:4px;background:#f4f4f6"></i></div>
<div class="pin" style="left:222px;top:353px"><i style="left:1px;top:0;width:5px;height:1px"></i><i style="left:1px;top:0;width:1px;height:5px"></i><i style="left:4px;top:0;width:2px;height:5px"></i><i style="left:0;top:5px;width:7px;height:1px"></i><i style="left:3px;top:6px;width:1px;height:3px"></i><i style="left:2px;top:1px;width:2px;height:4px;background:#f4f4f6"></i></div>
<div class="pin" style="left:901px;top:534px"><i style="left:1px;top:0;width:5px;height:1px"></i><i style="left:1px;top:0;width:1px;height:5px"></i><i style="left:4px;top:0;width:2px;height:5px"></i><i style="left:0;top:5px;width:7px;height:1px"></i><i style="left:3px;top:6px;width:1px;height:3px"></i><i style="left:2px;top:1px;width:2px;height:4px;background:#f4f4f6"></i></div>
<svg style="left:239px;top:200.5px" width="8" height="5.2" viewBox="0 0 8 5.2"><path d="M0.8 1L4.0 4.2L7.2 1" fill="none" stroke="#444" stroke-width="1.1"/></svg>
<svg style="left:238.7px;top:221px" width="8" height="5.4" viewBox="0 0 8 5.4"><path d="M0.8 4.4L4.0 1L7.2 4.4" fill="none" stroke="#505050" stroke-width="1.9"/></svg>
<svg style="left:238.7px;top:330.5px" width="8" height="5.4" viewBox="0 0 8 5.4"><path d="M0.8 1L4.0 4.4L7.2 1" fill="none" stroke="#505050" stroke-width="1.9"/></svg>
<svg style="left:903.5px;top:178px" width="8" height="5.4" viewBox="0 0 8 5.4"><path d="M0.8 4.4L4.0 1L7.2 4.4" fill="none" stroke="#505050" stroke-width="1.9"/></svg>
<svg style="left:903.5px;top:491.5px" width="8" height="5.4" viewBox="0 0 8 5.4"><path d="M0.8 1L4.0 4.4L7.2 1" fill="none" stroke="#505050" stroke-width="1.9"/></svg>
<svg style="left:690px;top:508.5px" width="5.4" height="8" viewBox="0 0 5.4 8"><path d="M4.4 0.8L1 4.0L4.4 7.2" fill="none" stroke="#505050" stroke-width="1.9"/></svg>
<svg style="left:887px;top:508.5px" width="5.4" height="8" viewBox="0 0 5.4 8"><path d="M1 0.8L4.4 4.0L1 7.2" fill="none" stroke="#505050" stroke-width="1.9"/></svg>
<svg style="left:901.5px;top:554.5px" width="8" height="5.4" viewBox="0 0 8 5.4"><path d="M0.8 4.4L4.0 1L7.2 4.4" fill="none" stroke="#c2c2c2" stroke-width="1.9"/></svg>
<svg style="left:901.5px;top:593px" width="8" height="5.4" viewBox="0 0 8 5.4"><path d="M0.8 1L4.0 4.4L7.2 1" fill="none" stroke="#c2c2c2" stroke-width="1.9"/></svg>
<svg style="left:663px;top:513px" width="9" height="7" viewBox="0 0 9 7"><path d="M1 1.5L4.5 5L8 1.5" fill="none" stroke="#8a7a28" stroke-width="3.5" stroke-linecap="round" stroke-linejoin="round"/><path d="M1.1 1.6L4.5 5L7.9 1.6" fill="none" stroke="#fff" stroke-width="2.3" stroke-linecap="round" stroke-linejoin="round"/></svg>
<div class="a" style="left:849px;top:180px;width:11px;height:5px;background:#fff;border:1px solid #6a7078"></div>
<svg style="left:865px;top:174px" width="12" height="11" viewBox="0 0 12 11">
<rect x="5.2" y="1" width="6" height="5.6" fill="#000" stroke="#dfe3e8" stroke-width="1.5"/>
<rect x="0.9" y="4.4" width="6" height="5.6" fill="#000" stroke="#3a4048" stroke-width="2.6"/>
<rect x="0.9" y="4.4" width="6" height="5.6" fill="#000" stroke="#f2f4f6" stroke-width="1.6"/>
<rect x="0.2" y="3.7" width="7.4" height="1.4" fill="#f2f4f6"/></svg>
<svg style="left:881px;top:176.2px" width="11" height="9" viewBox="0 0 11 9"><path d="M1.6 1L9.4 8M9.4 1L1.6 8" stroke="#707880" stroke-width="3.6"/><path d="M1.6 1L9.4 8M9.4 1L1.6 8" stroke="#fff" stroke-width="2.2"/></svg>
<!-- ===== STATUS BAR ===== -->
<div class="a" style="left:3px;top:628px;width:913px;height:1px;background:#1a1a1a"></div>
<div class="a" style="left:3px;top:629px;width:913px;height:18px;background:linear-gradient(#bcbcbc,#8a8a8a)"></div>
<div class="st" style="left:10px">New1.dxf</div>
<div class="st" style="left:469px">(-7.297631; 8.503327; 0)</div>
<div class="st" style="left:840px">297 x 210 x 0</div>
<div class="ssep" style="left:283px"></div>
<div class="ssep" style="left:383px"></div>
<div class="ssep" style="left:403px"></div>
<div class="ssep" style="left:423px"></div>
<div class="ssep" style="left:443px"></div>
<div class="ssep" style="left:463px"></div>
<div class="ssep" style="left:713px"></div>
<div class="ssep" style="left:834px"></div>
<!-- status icons -->
<svg style="left:385px;top:629px" width="16" height="17" viewBox="0 0 16 17">
<path d="M2.4 11V6.4C2.4 0.6 10.6 0.6 10.6 6.4V11" fill="none" stroke="#e84a4a" stroke-width="2.3"/>
<path d="M6.5 2.05C9 2.05 10.6 3.6 10.6 6.4V11" fill="none" stroke="#3a78e8" stroke-width="2.3"/>
<path d="M3.6 6.4C3.6 3 9.4 3 9.4 6.4" fill="none" stroke="#f4c0c0" stroke-width=".6"/>
<path d="M1 9.6L5 13.6L11.6 6.6" fill="none" stroke="#0a3a0a" stroke-width="3.2"/>
<path d="M1 9.6L5 13.6L11.6 6.6" fill="none" stroke="#18c018" stroke-width="1.8"/>
<rect x="11.4" y="12" width="3" height="3" fill="#e01010"/></svg>
<svg style="left:405px;top:630px" width="16" height="16" viewBox="0 0 16 16">
<g fill="#e8e4cc"><rect x="1" y="1" width="2" height="2"/><rect x="7" y="1" width="2" height="2"/><rect x="13" y="1" width="2" height="2"/><rect x="1" y="7" width="2" height="2"/><rect x="7" y="7" width="2" height="2"/><rect x="13" y="7" width="2" height="2"/><rect x="1" y="13" width="2" height="2"/><rect x="7" y="13" width="2" height="2"/><rect x="13" y="13" width="2" height="2"/></g>
<g fill="#222"><rect x=".4" y=".4" width="1.9" height="1.9"/><rect x="6.4" y=".4" width="1.9" height="1.9"/><rect x="12.4" y=".4" width="1.9" height="1.9"/><rect x=".4" y="6.4" width="1.9" height="1.9"/><rect x="6.4" y="6.4" width="1.9" height="1.9"/><rect x="12.4" y="6.4" width="1.9" height="1.9"/><rect x=".4" y="12.4" width="1.9" height="1.9"/><rect x="6.4" y="12.4" width="1.9" height="1.9"/><rect x="12.4" y="12.4" width="1.9" height="1.9"/></g></svg>
<div class="a" style="left:432px;top:631px;width:1px;height:11px;background:#1a5ad0"></div>
<div class="a" style="left:426px;top:641px;width:13px;height:1px;background:#1a5ad0"></div>
<svg style="left:445px;top:628px" width="18" height="18" viewBox="0 0 18 18">
<circle cx="6.6" cy="9.6" r="4.6" fill="#f4f6fc" stroke="#2a66d8" stroke-width="1.3"/>
<path d="M5 9.8L12.8 1" stroke="#111" stroke-width="1.3"/><path d="M9.6 9.6H15" stroke="#111" stroke-width="1"/>
<path d="M1 10.6L5 14.6L10.8 8.2" fill="none" stroke="#0a3a0a" stroke-width="3.2"/>
<path d="M1 10.6L5 14.6L10.8 8.2" fill="none" stroke="#18c018" stroke-width="1.8"/></svg>
</body>
</html>
